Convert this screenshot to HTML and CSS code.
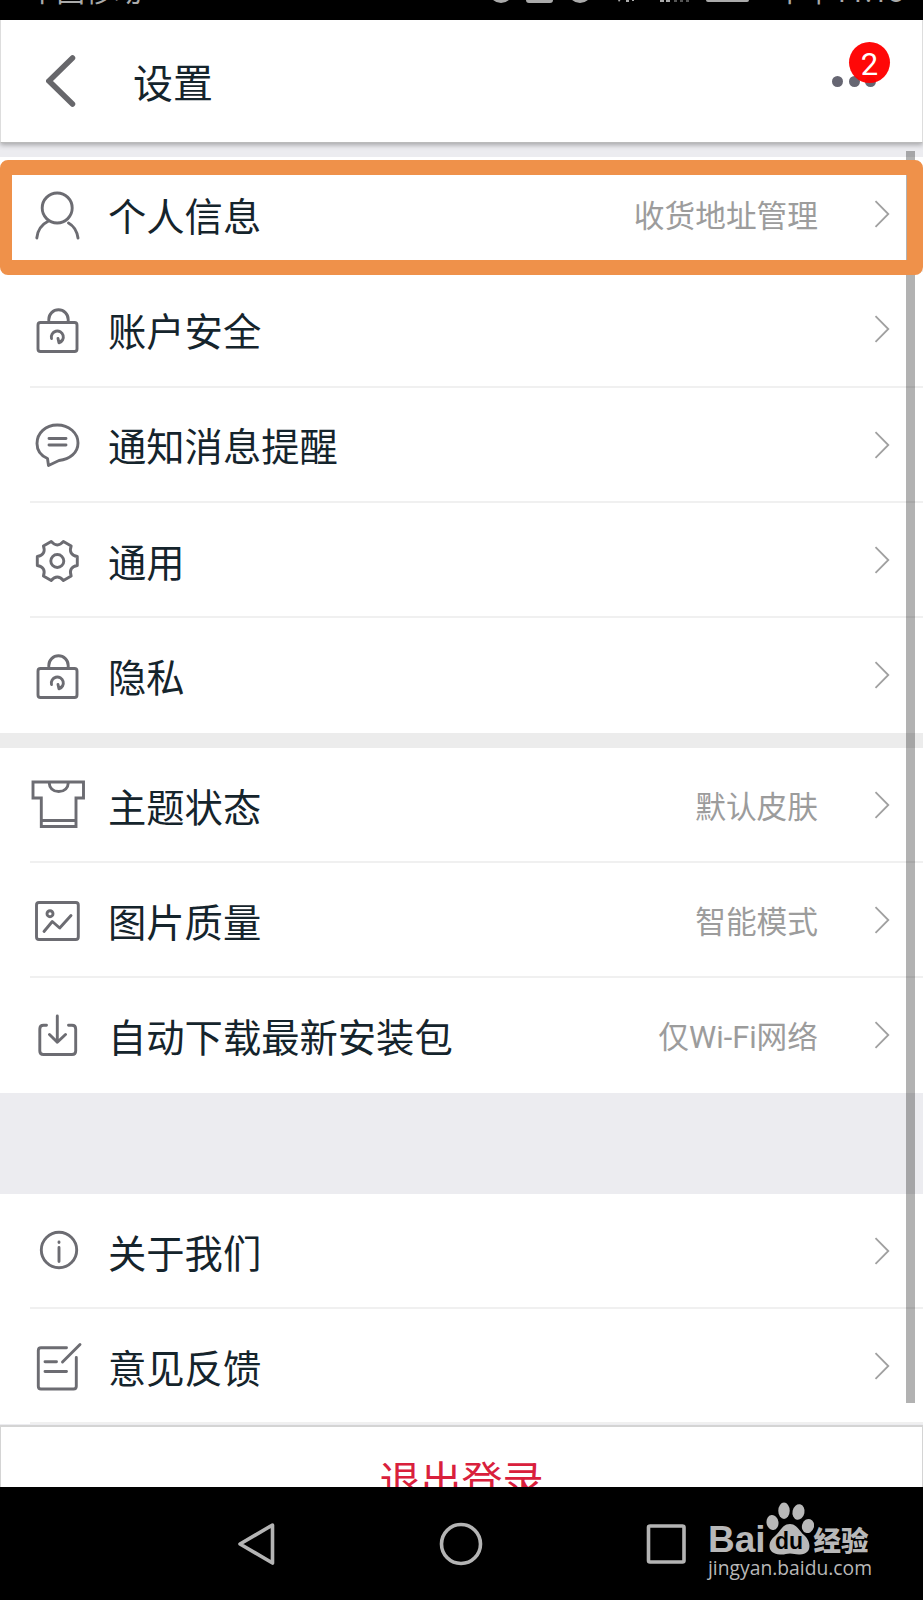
FILE: index.html
```html
<!DOCTYPE html>
<html lang="zh-CN">
<head>
    <meta charset="UTF-8">
    <meta name="viewport" content="width=device-width, initial-scale=1.0">
    <title>设置</title>
    <link rel="stylesheet" href="styles.css">
</head>
<body>
    <!-- Shared icon shapes -->
    <svg class="sprite">
        <symbol id="lock" viewBox="0 0 60 60">
            <path d="M20.800 20.500V19.500a9.700 9.700 0 0 1 19.400 0V22"/>
            <rect x="10" y="22.500" width="39" height="29" rx="2.500"/>
            <path d="M23.500 38.500a6 6 0 1 1 7.500 4.300L30 38.500M31 42.800L33 41"/>
        </symbol>
        <symbol id="arrow" viewBox="0 0 16 28">
            <path d="M1.500 1.200L14.300 14L1.500 26.800"/>
        </symbol>
    </svg>

    <div class="status-bar">
        <span class="carrier">中国移动</span>
        <svg class="status-icons" viewBox="0 0 270 6">
            <circle cx="11" cy="-9" r="12"/>
            <rect x="36" y="-20" width="27" height="23" rx="3"/>
            <circle cx="90" cy="-9" r="12"/>
            <path d="M127 -2l2 4l3-4zM136-5h3v7h-3zM142-5h2v6h-2zM170-5h4v7h-4zM176-5h4v7h-4z"/>
            <path class="dim" d="M184 0h3v2h-3zM190 0h3v2h-3zM196 0h3v2h-3z"/>
            <rect x="216" y="-20" width="43" height="22" rx="2"/>
        </svg>
        <span class="time">下午<span class="digits">11:18</span></span>
    </div>

    <div class="header">
        <svg class="back" viewBox="0 0 30 54">
            <path d="M26.500 4L3 27L26.500 50"/>
        </svg>
        <h1 class="title">设置</h1>
        <div class="more">
            <i></i><i></i><i></i>
            <span class="badge">2</span>
        </div>
    </div>

    <div class="page">
        <div class="group first">
            <div class="row">
                <svg class="icon" viewBox="0 0 60 60"><circle cx="29.200" cy="23" r="15"/><path d="M20.500 36C13.500 39.500 9.500 45.500 8.800 53M40.500 38C46 41 49 46.500 50 53"/></svg>
                <span class="label">个人信息</span>
                <span class="value">收货地址管理</span>
                <svg class="arrow"><use href="#arrow"/></svg>
            </div>
            <div class="row">
                <svg class="icon"><use href="#lock"/></svg>
                <span class="label">账户安全</span>
                <svg class="arrow"><use href="#arrow"/></svg>
            </div>
            <div class="row">
                <svg class="icon" viewBox="0 0 60 60"><path d="M19.500 43.500C12.500 40.500 9 35 9 28.500C9 18 17.500 10 29.300 10S50 18 50 28C50 37.500 42 44.500 31 45.500L20.500 50.500Z"/><path d="M21 23.500H38M21 30H38"/></svg>
                <span class="label">通知消息提醒</span>
                <svg class="arrow"><use href="#arrow"/></svg>
            </div>
            <div class="row">
                <svg class="icon" viewBox="-29.300 -30 60 60"><path d="M20-4.500V4.500C14 5.500 11.750 9.400 13.900 15.070L6.100 19.570C2.240 14.870-2.240 14.870-6.100 19.570L-13.900 15.070C-11.750 9.400-14 5.500-20 4.500V-4.500C-14-5.500-11.750-9.400-13.900-15.070L-6.100-19.570C-2.240-14.870 2.240-14.870 6.100-19.570L13.900-15.070C11.750-9.400 14-5.500 20-4.500Z"/><circle r="6.500"/></svg>
                <span class="label">通用</span>
                <svg class="arrow"><use href="#arrow"/></svg>
            </div>
            <div class="row">
                <svg class="icon"><use href="#lock"/></svg>
                <span class="label">隐私</span>
                <svg class="arrow"><use href="#arrow"/></svg>
            </div>
        </div>

        <div class="group second">
            <div class="row">
                <svg class="icon shirt" viewBox="0 0 60 60"><path d="M5 6H55.500V22H48V50.500H13.300V22H5ZM13.300 44.500H48M21 6C21.500 12.500 25 15.500 30.700 15.500S40 12.500 40.500 6"/></svg>
                <span class="label">主题状态</span>
                <span class="value">默认皮肤</span>
                <svg class="arrow"><use href="#arrow"/></svg>
            </div>
            <div class="row">
                <svg class="icon" viewBox="0 0 60 60"><rect x="8.500" y="11.500" width="41.800" height="37" rx="2.500"/><circle cx="22" cy="22.700" r="3"/><path d="M16 40.500L24.300 30.500L31.700 37L43 24.500"/></svg>
                <span class="label">图片质量</span>
                <span class="value">智能模式</span>
                <svg class="arrow"><use href="#arrow"/></svg>
            </div>
            <div class="row">
                <svg class="icon" viewBox="0 0 60 60"><path d="M18.500 19.300H15.500Q11.800 19.300 11.800 23V45Q11.800 48.500 15.500 48.500H44Q47.700 48.500 47.700 45V23Q47.700 19.300 44 19.300H40.500M29.300 10V36M21.500 28.500L29.300 36.300L37.500 28.500"/></svg>
                <span class="label">自动下载最新安装包</span>
                <span class="value">仅<span class="latin">Wi-Fi</span>网络</span>
                <svg class="arrow"><use href="#arrow"/></svg>
            </div>
        </div>

        <div class="group third">
            <div class="row">
                <svg class="icon" viewBox="0 0 60 60"><circle cx="31" cy="28" r="17.700"/><path d="M31 25.500V39.500M31 20V20.600"/></svg>
                <span class="label">关于我们</span>
                <svg class="arrow"><use href="#arrow"/></svg>
            </div>
            <div class="row">
                <svg class="icon" viewBox="0 0 60 60"><path d="M38.500 10.700H13Q10.300 10.700 10.300 13.500V49.200Q10.300 52 13 52H45.500Q48.300 52 48.300 49.200V20.500M34.500 25L52 7.500M17 24.700H28.500M17 34.500H38.500"/></svg>
                <span class="label">意见反馈</span>
                <svg class="arrow"><use href="#arrow"/></svg>
            </div>
        </div>

        <div class="scrollbar"></div>
        <div class="highlight"></div>
    </div>

    <div class="logout">退出登录</div>

    <div class="nav-bar">
        <svg class="nav-icon" viewBox="0 0 44 44"><path d="M38.500 3L6 22L38.500 41Z"/></svg>
        <svg class="nav-icon" viewBox="0 0 44 44"><circle cx="22" cy="22" r="19.500"/></svg>
        <svg class="nav-icon" viewBox="0 0 44 44"><rect x="4.500" y="4" width="35.500" height="36" rx="1.500"/></svg>

        <div class="watermark">
            <div class="brand">
                <span class="bai">Bai</span>
                <svg class="paw" viewBox="0 0 48 54">
                    <ellipse cx="6.500" cy="20.500" rx="6" ry="7.500" transform="rotate(-8 6.500 20.500)"/>
                    <ellipse cx="18" cy="8.800" rx="5.700" ry="8.200"/>
                    <ellipse cx="32.500" cy="10" rx="6" ry="7.800" transform="rotate(12 32.500 10)"/>
                    <ellipse cx="42" cy="24" rx="6" ry="7.200" transform="rotate(18 42 24)"/>
                    <path d="M24 22C31 22 33 29 38 33C45 39 47 52 34 52.500C29 52.700 28 51.500 24 51.500S19 52.800 14 52.500C1 52 1 40 9 34C15 29 16 22 24 22Z"/>
                    <text x="23" y="47">du</text>
                </svg>
                <span class="jy">经验</span>
            </div>
            <div class="site">jingyan.baidu.com</div>
        </div>
    </div>
</body>
</html>
```

FILE: styles.css
```css
* {
    box-sizing: border-box;
}

body {
    margin: 0;
    width: 923px;
    height: 1600px;
    display: flex;
    flex-direction: column;
    overflow: hidden;
    background-color: #fff;
    font-family: "Noto Sans CJK SC", sans-serif;
}

.sprite {
    position: absolute;
    width: 0;
    height: 0;
}

/* Status bar, scrolled so only its lower edge shows */
.status-bar {
    flex: none;
    height: 20px;
    padding: 0 19px 0 28px;
    display: flex;
    align-items: flex-end;
    overflow: hidden;
    background-color: #000;
    color: #aaa;
    font-size: 28.500px;
    line-height: 40px;
}

.carrier,
.time {
    height: 40px;
    margin-bottom: 10px;
    white-space: nowrap;
}

.status-icons {
    width: 270px;
    height: 6px;
    margin: 0 0 14px 348px;
    fill: #aaa;
}

.status-icons .dim {
    fill: #555;
}

.time {
    display: flex;
    margin-left: auto;
}

.digits {
    padding-top: 3px;
    font-family: Roboto, sans-serif;
}

.header {
    position: relative;
    z-index: 2;
    flex: none;
    height: 123px;
    padding: 0 46px 0 45px;
    display: flex;
    align-items: center;
    background-color: #fff;
    border: 1px solid #ddd;
    border-top: 0;
    border-bottom-color: #bbb;
    box-shadow: 0 2px 5px rgba(0, 0, 0, 0.3);
}

.back {
    width: 30px;
    height: 54px;
    fill: none;
    stroke: #67676b;
    stroke-width: 5.500;
    stroke-linecap: round;
}

.title {
    margin: 0 0 0 57px;
    font-size: 40px;
    font-weight: 400;
    color: #15242c;
}

.more {
    position: relative;
    margin-left: auto;
    display: flex;
    gap: 5.500px;
}

.more i {
    width: 11px;
    height: 11px;
    border-radius: 50%;
    background-color: #666672;
}

.badge {
    position: absolute;
    left: 17px;
    top: -34px;
    width: 41px;
    height: 41px;
    border-radius: 50%;
    background-color: rgba(255, 0, 0, 0.97);
    color: #fff;
    font: 31px/45px Roboto, sans-serif;
    text-align: center;
}

.page {
    position: relative;
    flex: none;
    height: 1282px;
    padding-top: 14px;
    background-color: #ececf0;
}

.group {
    background-color: #fff;
}

.first {
    height: 576px;
}

.second {
    margin-top: 15px;
    box-shadow: 0 -15px #ececec;
}

.third {
    margin-top: 101px;
}

.row {
    height: 115px;
    padding: 0 33px 0 28px;
    display: flex;
    align-items: center;
    background: linear-gradient(#f0f0f0, #f0f0f0) no-repeat 30px 100%;
    background-size: 100% 2px;
}

.first .row {
    height: 115.300px;
}

.first .row:last-child,
.second .row:last-child {
    background: none;
}

.icon {
    flex: none;
    width: 60px;
    height: 60px;
    fill: none;
    stroke: #6c6c72;
    stroke-width: 2.900;
    stroke-linecap: round;
    stroke-linejoin: round;
}

.shirt {
    stroke-linejoin: miter;
}

.label {
    margin: -1px 0 0 20px;
    font-size: 38.300px;
    color: #15242c;
    white-space: nowrap;
}

.value {
    margin: -2px 0 0 auto;
    font-size: 30.700px;
    color: #9c9c9c;
}

.latin {
    font-family: Roboto, sans-serif;
}

.arrow {
    flex: none;
    width: 16px;
    height: 28px;
    margin: -1px 0 0 auto;
    fill: none;
    stroke: #a0a0a0;
    stroke-width: 1.800;
}

.value + .arrow {
    margin-left: 56px;
}

.scrollbar {
    position: absolute;
    left: 906px;
    top: 8px;
    width: 9px;
    height: 1252px;
    background-color: rgba(0, 0, 0, 0.3);
}

/* Orange frame over the first row */
.highlight {
    position: absolute;
    left: 0;
    top: 17px;
    width: 923px;
    height: 115px;
    border: solid #ef914a;
    border-width: 15px 16px 15px 12px;
    border-radius: 8px;
}

.logout {
    flex: none;
    height: 62px;
    padding-top: 21px;
    overflow: hidden;
    background-color: #fff;
    border: 1px solid #d4d4d4;
    border-top-width: 2px;
    border-bottom: 0;
    color: #d9203c;
    font-size: 41px;
    line-height: 60px;
    text-align: center;
}

.nav-bar {
    flex: none;
    height: 113px;
    padding: 0 50px 0 234px;
    display: flex;
    align-items: center;
    background-color: #000;
}

.nav-icon {
    flex: none;
    width: 44px;
    height: 44px;
    margin-right: 161px;
    fill: none;
    stroke: #b4b4b4;
    stroke-width: 3.600;
    stroke-linejoin: round;
}

.nav-icon:nth-child(3) {
    margin-right: 20px;
}

.watermark {
    margin-top: -6px;
    color: #b8b8b8;
}

.brand {
    height: 54px;
    display: flex;
    align-items: flex-end;
}

.bai {
    font: bold 37px/33px "Liberation Sans", sans-serif;
}

.paw {
    width: 48px;
    height: 54px;
    fill: #b8b8b8;
}

.paw text {
    fill: #000;
    font: bold 23px "Liberation Sans", sans-serif;
    text-anchor: middle;
}

.jy {
    margin-bottom: 3px;
    font-size: 27.500px;
    font-weight: 900;
    line-height: 27px;
}

.site {
    font: 19.300px/24px "Open Sans", sans-serif;
}
```
